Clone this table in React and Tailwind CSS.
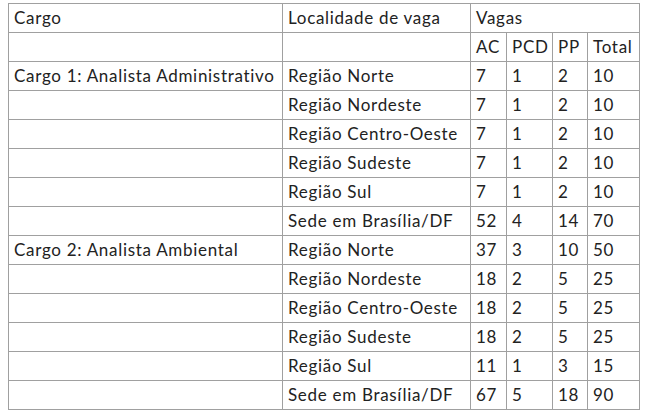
const rows = [
  ["Cargo 1: Analista Administrativo", "Região Norte", "7", "1", "2", "10"],
  ["", "Região Nordeste", "7", "1", "2", "10"],
  ["", "Região Centro-Oeste", "7", "1", "2", "10"],
  ["", "Região Sudeste", "7", "1", "2", "10"],
  ["", "Região Sul", "7", "1", "2", "10"],
  ["", "Sede em Brasília/DF", "52", "4", "14", "70"],
  ["Cargo 2: Analista Ambiental", "Região Norte", "37", "3", "10", "50"],
  ["", "Região Nordeste", "18", "2", "5", "25"],
  ["", "Região Centro-Oeste", "18", "2", "5", "25"],
  ["", "Região Sudeste", "18", "2", "5", "25"],
  ["", "Região Sul", "11", "1", "3", "15"],
  ["", "Sede em Brasília/DF", "67", "5", "18", "90"],
];

const td = "border border-[#a0a0a0] h-[29px] p-0 pl-[5px] align-middle whitespace-nowrap";

export default function App() {
  return (
    <div className="bg-white w-[646px] h-[415px] pt-[3px] pl-[8px] font-['Lato','Liberation_Sans',sans-serif] text-[17px] tracking-[0.7px] text-[#222]">
      <table className="table-fixed border-collapse w-[631px]">
        <colgroup>
          <col className="w-[274px]" />
          <col className="w-[188px]" />
          <col className="w-[36px]" />
          <col className="w-[46px]" />
          <col className="w-[35px]" />
          <col className="w-[52px]" />
        </colgroup>
        <tbody>
          <tr>
            <td className={td}>Cargo</td>
            <td className={td}>Localidade de vaga</td>
            <td className={td} colSpan={4}>Vagas</td>
          </tr>
          <tr>
            <td className={td}></td>
            <td className={td}></td>
            <td className={td}>AC</td>
            <td className={td}>PCD</td>
            <td className={td}>PP</td>
            <td className={td}>Total</td>
          </tr>
          {rows.map((r, i) => (
            <tr key={i}>
              {r.map((c, j) => (
                <td key={j} className={td}>{c}</td>
              ))}
            </tr>
          ))}
        </tbody>
      </table>
    </div>
  );
}
